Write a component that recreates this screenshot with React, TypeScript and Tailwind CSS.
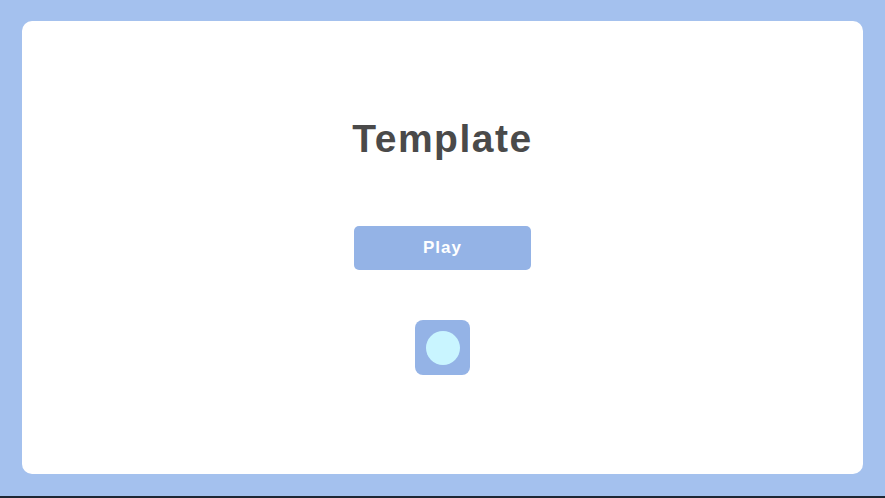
export default function App() {
  return (
    <div className="flex h-[498px] w-full flex-col bg-[#a4c1ee] font-['Liberation_Sans',Arial,sans-serif]">
      <div className="flex flex-1 px-[22px] pb-[22px] pt-[21px]">
        <main className="flex flex-1 flex-col items-center rounded-[10px] bg-white">
          <h1 className="mt-[96px] text-[39px] font-bold leading-[43px] tracking-[1.5px] text-[#4a4a4a]">Template</h1>
          <button className="mt-[66px] h-[44px] w-[177px] rounded-[5px] bg-[#94b3e6] text-[17px] font-bold tracking-[1px] text-white">
            Play
          </button>
          <button className="mt-[50px] flex h-[55px] w-[55px] items-center justify-center rounded-[8px] bg-[#94b3e6]">
            <span className="h-[34px] w-[34px] rounded-full bg-[#c9f5ff]" />
          </button>
        </main>
      </div>
      <div className="h-[2px] bg-[#1e2733]" />
    </div>
  )
}
